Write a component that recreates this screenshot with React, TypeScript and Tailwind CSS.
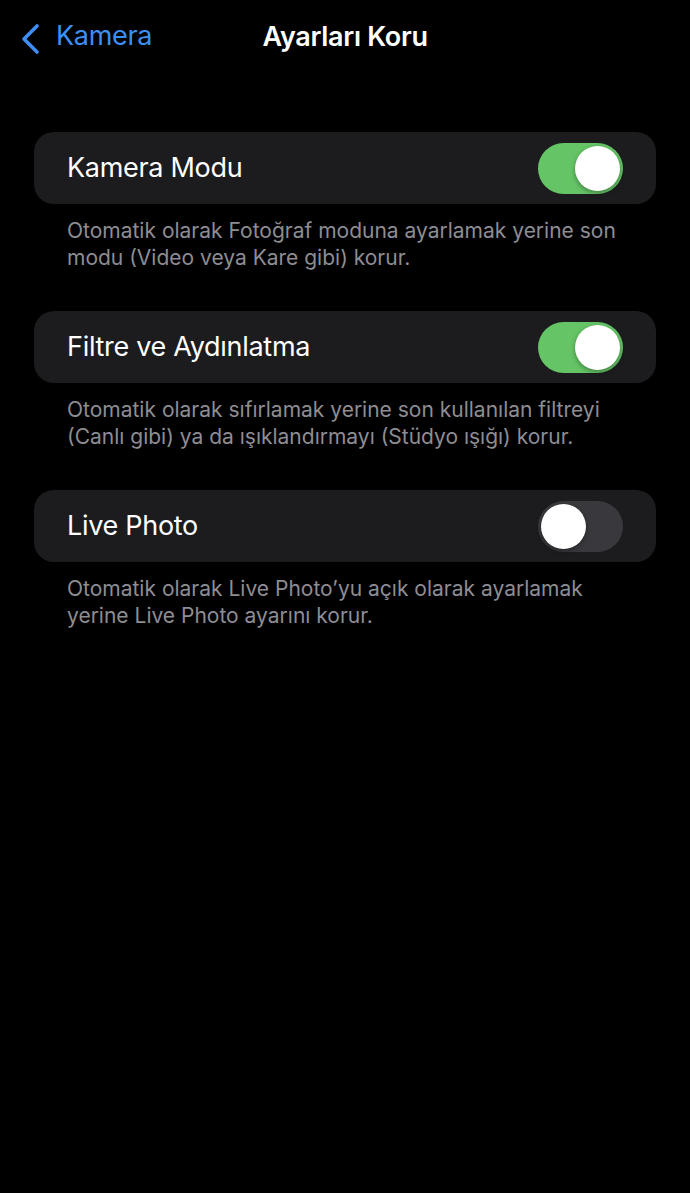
// ── Types ──────────────────────────────────────────────
interface ToggleRowProps {
  label: string;
  on: boolean;
  note: string[];
}

// ── Sub-components ─────────────────────────────────────

function Switch({ on }: { on: boolean }) {
  return (
    <div
      className={
        "w-[85px] h-[51px] rounded-full p-[3px] flex items-center flex-shrink-0 " +
        (on ? "bg-[#65c466] justify-end" : "bg-[#39393d] justify-start")
      }
    >
      <div className="w-[45px] h-[45px] rounded-full bg-white shadow-[0_2px_5px_rgba(0,0,0,0.35)]" />
    </div>
  );
}

function ToggleRow({ label, on, note }: ToggleRowProps) {
  return (
    <div>
      <div className="mx-[34px] h-[72px] rounded-[20px] bg-[#1c1c1e] flex items-center justify-between pl-[33px] pr-[33px]">
        <span className="text-[27px] text-white tracking-[-0.3px] mt-[1px]">{label}</span>
        <Switch on={on} />
      </div>
      <div className="pl-[67px] pr-[30px] pt-[13px] text-[21px] leading-[27px] text-[#8d8d93] tracking-[0px]">
        {note.map((line) => (
          <p key={line} className="whitespace-nowrap">{line}</p>
        ))}
      </div>
    </div>
  );
}

// ── Page ───────────────────────────────────────────────
export default function App() {
  return (
    <div className="w-[690px] h-[1193px] bg-black font-['Inter','Liberation_Sans',sans-serif] overflow-hidden">

      {/* Nav bar */}
      <div className="relative h-[76px] flex items-center justify-center">
        <div className="absolute left-[20px] top-[21px] flex items-center gap-[14px] text-[#3e8ef7]">
          <svg width="22" height="32" viewBox="0 0 22 32" fill="none" stroke="currentColor" strokeWidth="3.6" strokeLinecap="round" strokeLinejoin="round">
            <polyline points="17,3 4,16 17,29" />
          </svg>
          <span className="text-[27px] tracking-[-0.3px] -mt-[5px]">Kamera</span>
        </div>
        <h1 className="text-[27px] font-semibold text-white tracking-[-0.3px] -mt-[1px]">Ayarları Koru</h1>
      </div>

      {/* Settings */}
      <div className="pt-[56px] flex flex-col gap-[40px]">
        <ToggleRow
          label="Kamera Modu"
          on
          note={[
            "Otomatik olarak Fotoğraf moduna ayarlamak yerine son",
            "modu (Video veya Kare gibi) korur.",
          ]}
        />
        <ToggleRow
          label="Filtre ve Aydınlatma"
          on
          note={[
            "Otomatik olarak sıfırlamak yerine son kullanılan filtreyi",
            "(Canlı gibi) ya da ışıklandırmayı (Stüdyo ışığı) korur.",
          ]}
        />
        <ToggleRow
          label="Live Photo"
          on={false}
          note={[
            "Otomatik olarak Live Photo’yu açık olarak ayarlamak",
            "yerine Live Photo ayarını korur.",
          ]}
        />
      </div>
    </div>
  );
}
